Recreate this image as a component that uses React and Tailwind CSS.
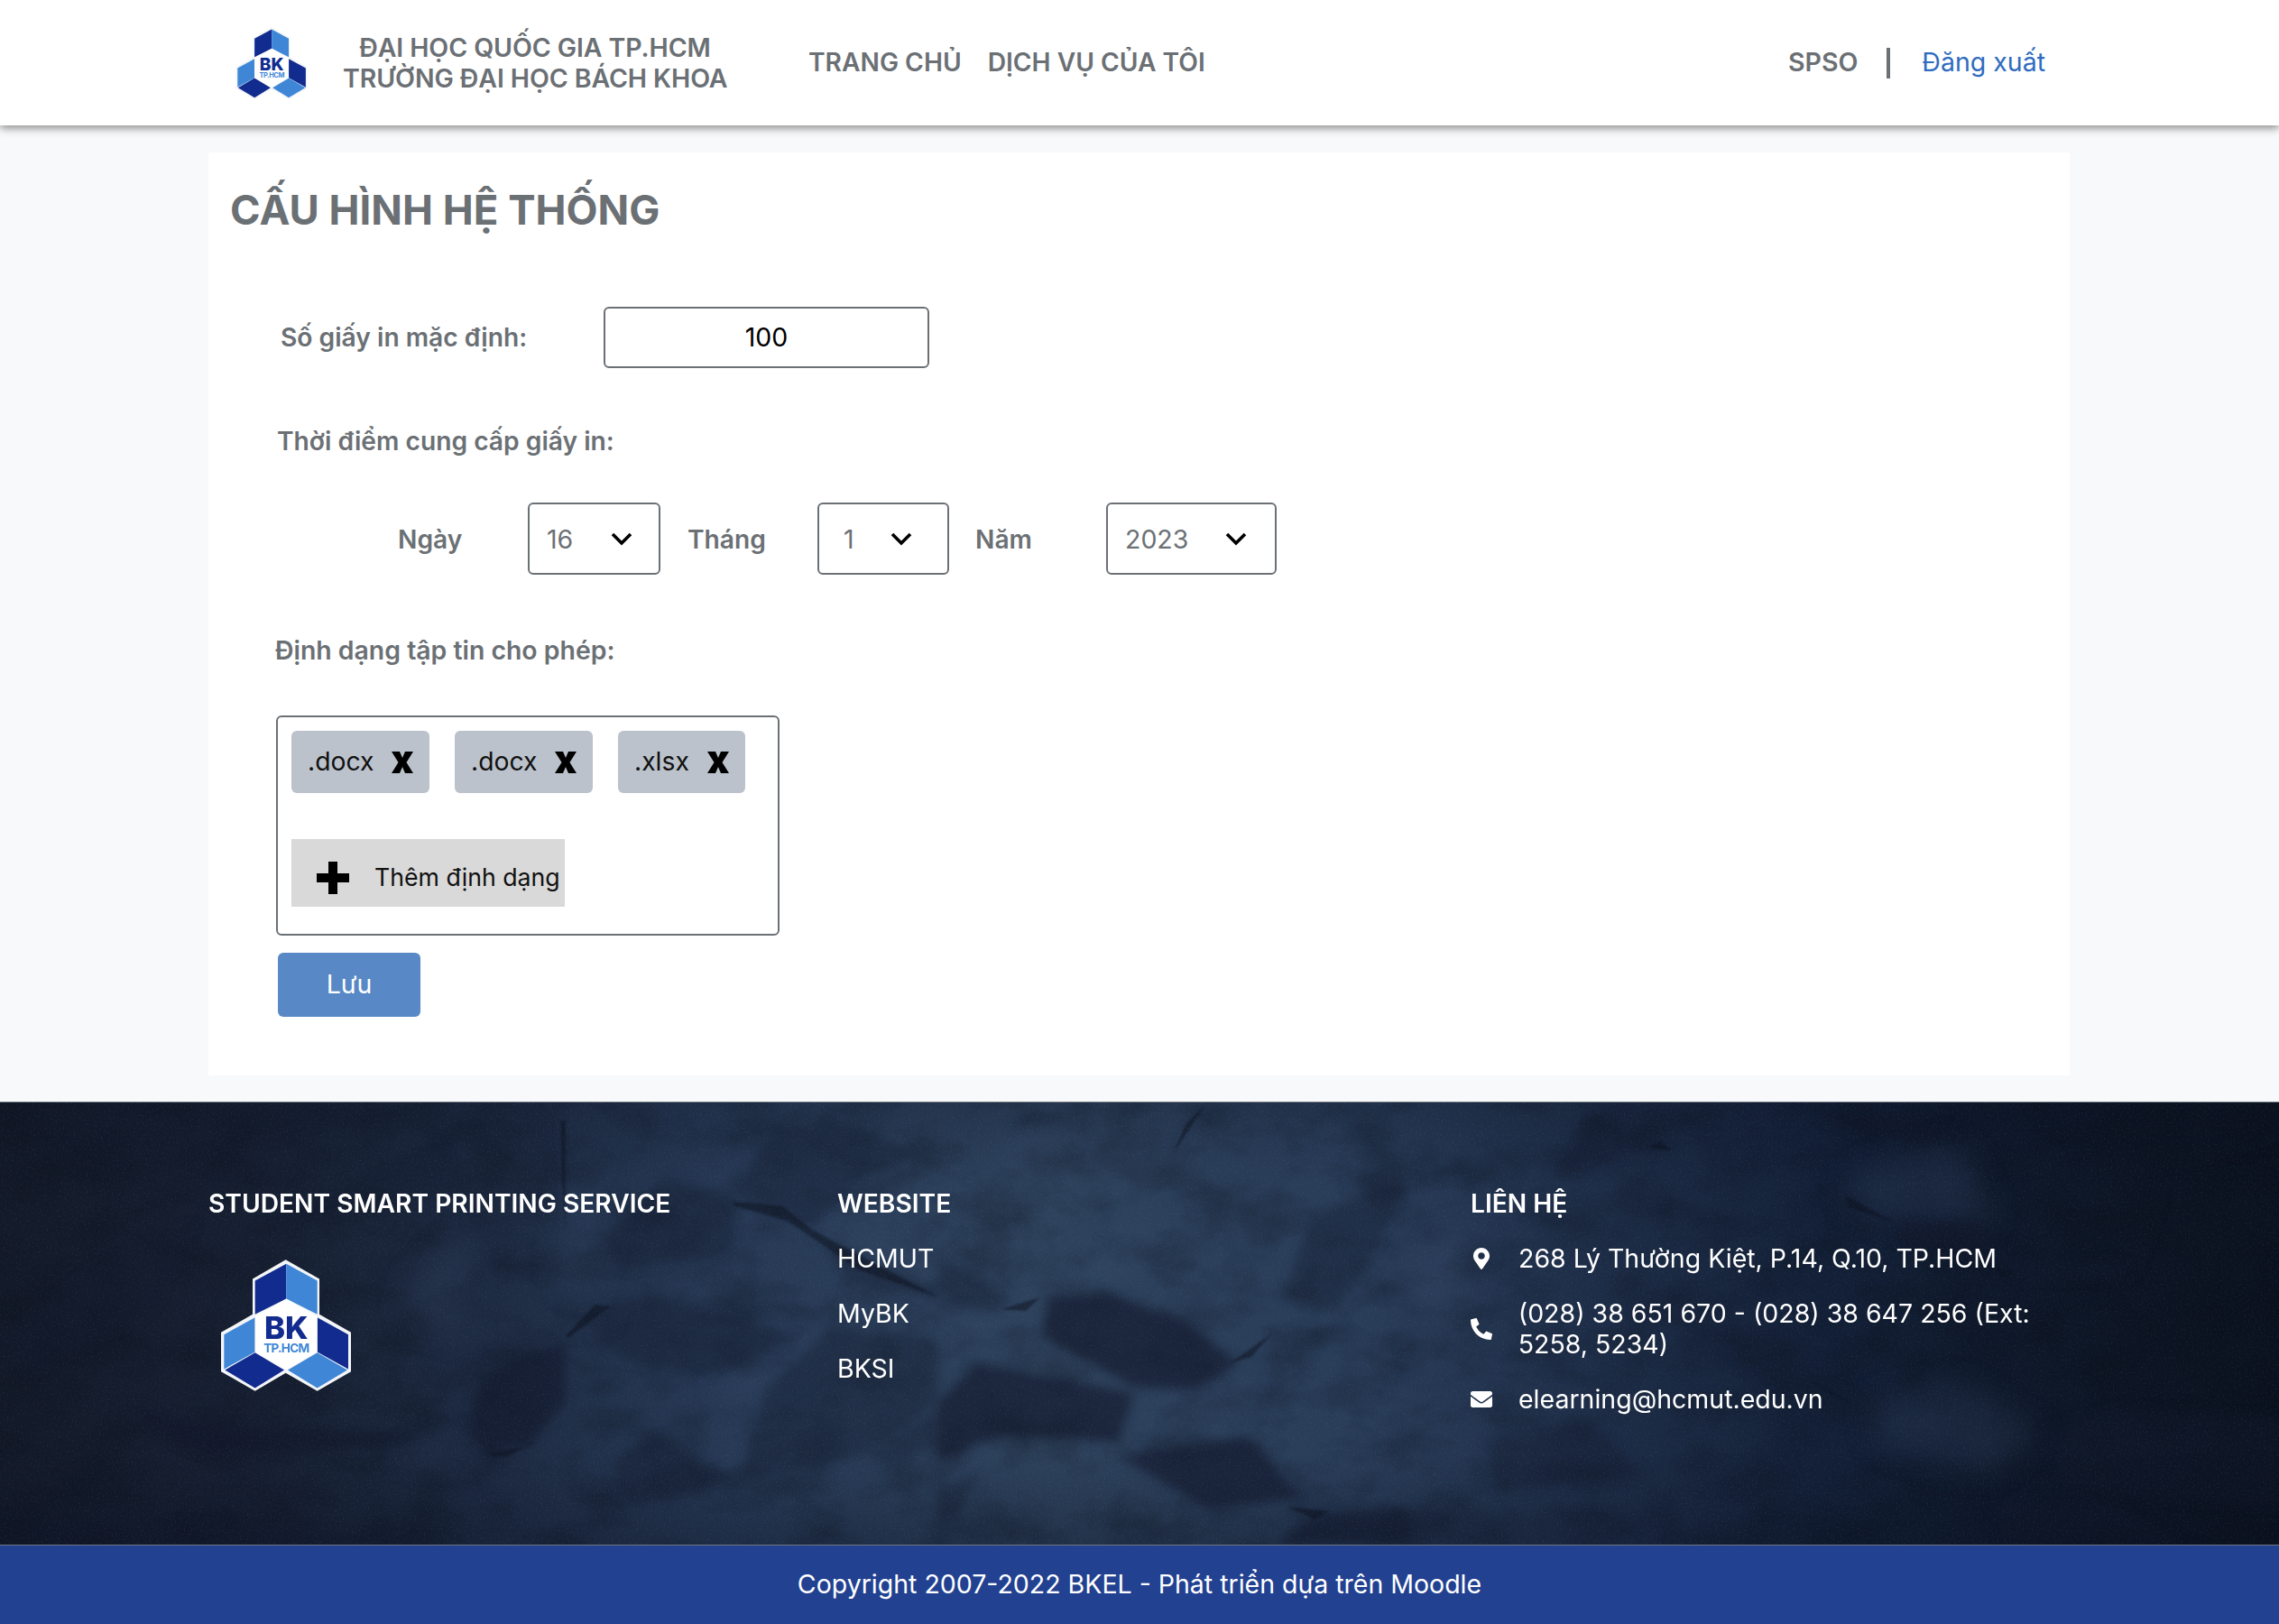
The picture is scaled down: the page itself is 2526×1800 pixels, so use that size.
import React from "react";
import { FaMapMarkerAlt, FaPhoneAlt, FaEnvelope } from "react-icons/fa";

function Logo({ className }) {
  return (
    <svg viewBox="0 0 432 437" className={className}>
      <g transform="translate(-135,-288)">
        <polygon points="350,288 462,352 462,470 567,530 567,660 455,725 350,665 248,725 135,660 135,530 240,470 240,352" fill="#f4f5f7" />
        <polygon points="352,302 248,358 248,470 352,418" fill="#112b8f" />
        <polygon points="352,302 455,358 455,470 352,418" fill="#3f87d6" />
        <polygon points="248,480 145,537 145,652 248,595" fill="#3f87d6" />
        <polygon points="248,597 148,655 248,715 345,655" fill="#112b8f" />
        <polygon points="455,480 558,537 558,652 455,595" fill="#112b8f" />
        <polygon points="455,597 357,655 455,715 555,655" fill="#3f87d6" />
        <polygon points="352,418 455,478 455,595 352,655 248,595 248,478" fill="#ffffff" />
        <text x="352" y="552" textAnchor="middle" fontFamily="Inter, sans-serif" fontWeight="800" fontSize="104" fill="#112b8f">BK</text>
        <text x="352" y="596" textAnchor="middle" fontFamily="Inter, sans-serif" fontWeight="700" fontSize="41" letterSpacing="-2.5" fill="#3f87d6">TP.HCM</text>
      </g>
    </svg>
  );
}

function Chevron() {
  return (
    <svg viewBox="0 0 24 15" className="h-[15px] w-[24px]">
      <path d="M2 2 L12 12 L22 2" fill="none" stroke="#000" strokeWidth="3.6" />
    </svg>
  );
}

function HeavyX() {
  return (
    <svg viewBox="0 0 24 24" className="h-[24px] w-[24px]">
      <polygon points="0,0 9,0 12,7 15,0 24,0 16.5,12 24,24 15,24 12,17 9,24 0,24 7.5,12" fill="#000" />
    </svg>
  );
}

function Chip({ label, w }) {
  return (
    <div className={`flex h-[69px] items-center rounded-[6px] bg-[#bbc2cb] pl-[18px] text-[28.3px] text-[#111] ${w}`}>
      <span>{label}</span>
      <span className="ml-[20px] flex"><HeavyX /></span>
    </div>
  );
}

function DateSelect({ value, w, textPad, chevPad }) {
  return (
    <div className={`flex h-[80px] items-center rounded-[6px] border-2 border-[#6b7075] text-[28.5px] text-[#6b7075] ${w} ${textPad}`}>
      <span className="pt-[2px]">{value}</span>
      <span className={`flex pt-[1px] ${chevPad}`}><Chevron /></span>
    </div>
  );
}

// polygon lists use coordinates of five 3x crops; [offset, "x,y x,y ..."]
const conv = ([off, s]) =>
  s.split(" ").map((q) => {
    const [x, y] = q.split(",").map(Number);
    return `${(x / 3 + off).toFixed(1)},${(y / 3).toFixed(1)}`;
  }).join(" ");

const veryDark = [
  [0, "400,1000 700,1080 1400,1100 1470,1000 1360,1140 750,1190 600,1140"],
  [520, "100,880 320,800 320,1000 200,1140 60,1180 0,1100 30,950"],
  [1040, "360,650 580,640 800,720 1000,870 850,960 650,950 350,780"],
  [1040, "0,1000 130,870 650,970 600,1130 200,1110 0,1200"],
  [1040, "580,1180 1040,1120 1200,1320 900,1360 650,1210"],
  [1040, "1250,1370 1560,1350 1560,1476 1130,1476"],
  [2006, "0,30 300,40 500,100 200,120"],
  [2006, "280,400 560,390 620,460 620,540 300,470"],
];
const dark = [
  [0, "1130,280 1500,90 1560,300 900,400"],
  [0, "0,800 300,560 650,400 500,700 100,900"],
  [0, "0,1430 500,1400 1560,1476 0,1476"],
  [520, "980,130 1200,50 1500,170 1300,260 1130,420 880,310"],
  [520, "450,450 650,250 880,310 880,500 500,560"],
  [520, "470,670 600,640 1000,760 1100,780 830,910 520,860 400,760"],
  [520, "990,950 1210,750 1560,790 1560,1000 1310,1180 900,1260"],
  [520, "480,1200 620,1090 750,1180 860,1250 680,1330 500,1310"],
  [520, "1320,1180 1560,1020 1560,1150 1400,1220"],
  [520, "1180,480 1560,620 1560,660 1300,600"],
  [1040, "0,530 60,540 240,650 200,700 30,680 0,620"],
  [1040, "1240,380 1400,310 1560,280 1450,500 1320,700 1150,650"],
  [1040, "1390,250 1440,230 1560,260 1560,320 1420,300"],
  [1040, "230,85 300,20 470,70 380,70"],
  [1040, "0,1290 140,1240 60,1380 0,1420"],
  [1560, "480,240 600,30 880,160 700,180 560,260"],
  [1560, "0,280 220,170 170,230"],
  [1560, "1000,760 1200,750 1560,1000 1560,1100 1250,1000"],
  [1560, "260,1130 600,1060 800,1250 300,1300"],
  [1560, "1300,0 1560,0 1560,130"],
  [1560, "0,1350 190,1380 40,1476 0,1476"],
  [2006, "640,540 1050,530 1060,590 700,590"],
  [2006, "600,1330 1000,1330 1240,1476 640,1476"],
  [2006, "770,1100 1000,1020 1560,1050 1560,1350 850,1300"],
];
const mid = [
  [0, "220,110 600,140 850,250 700,330 500,250"],
  [520, "0,0 300,0 300,400 0,420"],
  [1040, "760,330 880,270 1100,270 950,330"],
  [1040, "1100,780 1370,745 1100,930"],
  [1560, "1000,1400 1500,1476 1000,1476"],
];
const light = [
  [0, "1350,620 1560,420 1560,800 1350,720"],
  [0, "1290,1190 1560,1120 1560,1180"],
  [520, "810,930 1060,830 1210,750 1100,880 900,1000"],
  [520, "1130,430 1300,380 1560,420 1560,600"],
  [520, "330,250 430,240 460,430 400,640 300,600"],
  [1040, "0,700 290,720 230,800 0,860"],
  [1040, "230,650 520,480 760,340 620,600 360,640"],
  [1040, "700,1060 1000,900 1020,1020 800,1100"],
  [1040, "180,110 400,90 400,170 220,240"],
  [1560, "0,500 240,400 200,680 60,900"],
  [2006, "130,240 500,130 620,400 300,400 130,350"],
  [2006, "200,1000 500,940 770,1100 600,1240 220,1140"],
];
const creases = [
  [520, "880,330 1040,345 1140,425 1560,650 1300,560 1060,395 880,345"],
  [520, "305,60 320,60 320,420 310,260"],
  [520, "60,1175 200,1145 230,1125 120,1185"],
  [520, "470,680 420,675 320,780 330,785"],
  [1040, "210,690 340,650 290,695"],
  [1040, "780,170 890,5 825,70"],
  [1040, "1250,1390 1160,1350 1300,1365"],
  [1040, "970,870 1110,770 1040,850"],
  [1560, "840,130 880,160 800,150"],
  [2006, "280,400 120,310 130,350"],
  [2006, "620,550 680,570 640,580"],
  [2006, "1200,250 1560,140 1560,180 1300,220"],
  [2006, "1150,500 1210,270 1200,350 1090,620"],
  [2006, "150,1010 0,930 100,990"],
];

function Texture() {
  return (
    <svg viewBox="0 0 2526 492" preserveAspectRatio="none" className="absolute inset-0 h-full w-full">
      <defs>
        <linearGradient id="base" x1="0" x2="1" y1="0" y2="0">
          <stop offset="0" stopColor="#131a29" />
          <stop offset="0.12" stopColor="#172032" />
          <stop offset="0.21" stopColor="#1d2a41" />
          <stop offset="0.32" stopColor="#273955" />
          <stop offset="0.46" stopColor="#2e425c" />
          <stop offset="0.6" stopColor="#293c58" />
          <stop offset="0.7" stopColor="#1e2d47" />
          <stop offset="0.8" stopColor="#132037" />
          <stop offset="0.9" stopColor="#0e1727" />
          <stop offset="1" stopColor="#0b121f" />
        </linearGradient>
        <linearGradient id="vert" x1="0" x2="0" y1="0" y2="1">
          <stop offset="0" stopColor="#0a1020" stopOpacity="0.22" />
          <stop offset="0.18" stopColor="#0a1020" stopOpacity="0" />
          <stop offset="0.8" stopColor="#0a1020" stopOpacity="0" />
          <stop offset="1" stopColor="#0a1020" stopOpacity="0.3" />
        </linearGradient>
        <filter id="soft" colorInterpolationFilters="sRGB" x="-5%" y="-20%" width="110%" height="140%">
          <feGaussianBlur stdDeviation="6" />
        </filter>
        <filter id="softer" colorInterpolationFilters="sRGB" x="-5%" y="-20%" width="110%" height="140%">
          <feGaussianBlur stdDeviation="16" />
        </filter>
        <filter id="thin" colorInterpolationFilters="sRGB" x="-5%" y="-20%" width="110%" height="140%">
          <feGaussianBlur stdDeviation="1.2" />
        </filter>
        <filter id="mottle" colorInterpolationFilters="sRGB" x="0" y="0" width="100%" height="100%">
          <feTurbulence type="fractalNoise" baseFrequency="0.014 0.02" numOctaves="4" seed="11" />
          <feColorMatrix values="0 0 0 0 0.04  0 0 0 0 0.06  0 0 0 0 0.1  1.5 0 0 0 -0.62" />
        </filter>
        <filter id="grain" colorInterpolationFilters="sRGB" x="0" y="0" width="100%" height="100%">
          <feTurbulence type="fractalNoise" baseFrequency="0.5" numOctaves="2" seed="4" />
          <feColorMatrix values="0 0 0 0 0.5  0 0 0 0 0.6  0 0 0 0 0.75  2.6 0 0 0 -1.35" />
        </filter>
      </defs>
      <rect width="2526" height="492" fill="url(#base)" />
      <rect width="2526" height="492" filter="url(#mottle)" opacity="0.45" />
      <g filter="url(#softer)">
        {light.map((p) => <polygon key={p[1]} points={conv(p)} fill="#3b4f72" opacity="0.24" />)}
      </g>
      <g filter="url(#soft)">
        {mid.map((p) => <polygon key={p[1]} points={conv(p)} fill="#141a2a" opacity="0.25" />)}
        {dark.map((p) => <polygon key={p[1]} points={conv(p)} fill="#121a2c" opacity="0.38" />)}
        {veryDark.map((p) => <polygon key={p[1]} points={conv(p)} fill="#11172a" opacity="0.62" />)}
      </g>
      <g filter="url(#thin)">
        {creases.map((p) => <polygon key={p[1]} points={conv(p)} fill="#0b101c" opacity="0.5" />)}
      </g>
      <rect width="2526" height="492" fill="url(#vert)" />
      <rect width="2526" height="492" filter="url(#grain)" opacity="0.12" />
    </svg>
  );
}

const labelCls = "font-semibold text-[#6b7075]";

export default function App() {
  return (
    <div className="min-h-[1800px] w-[2526px] bg-[#f8f9fa] font-['Inter',sans-serif]">
      <header className="relative z-10 flex h-[139px] items-center bg-white pl-[261px] pr-[259px] shadow-[0_3px_9px_rgba(0,0,0,0.45)]">
        <Logo className="h-[80px] w-[80px]" />
        <div className="ml-[39px] w-[426px] whitespace-nowrap text-center text-[28.5px] font-semibold leading-[34px] tracking-[-0.1px] text-[#6b7075]">
          <div>ĐẠI HỌC QUỐC GIA TP.HCM</div>
          <div>TRƯỜNG ĐẠI HỌC BÁCH KHOA</div>
        </div>
        <nav className="ml-[90px] flex gap-[29px] text-[28.2px] font-semibold text-[#6b7075]">
          <span>TRANG CHỦ</span>
          <span>DỊCH VỤ CỦA TÔI</span>
        </nav>
        <div className="ml-auto flex items-center">
          <span className="text-[28.5px] font-semibold text-[#6b7075]">SPSO</span>
          <span className="ml-[32px] h-[34px] w-[4px] bg-[#6b7075]" />
          <span className="ml-[35px] text-[28.5px] text-[#2f6cc0]">Đăng xuất</span>
        </div>
      </header>

      <div className="pb-[29px] pl-[231px] pt-[30px]">
        <main className="h-[1023px] w-[2063px] bg-white pl-[24px] pt-[35px]">
          <h1 className="text-[45.5px] font-bold leading-[58px] text-[#6b7075]">CẤU HÌNH HỆ THỐNG</h1>

          <div className="ml-[56px] mt-[78px] flex items-center">
            <span className={`${labelCls} w-[358px] text-[28.2px]`}>Số giấy in mặc định:</span>
            <div className="flex h-[68px] w-[361px] items-center justify-center rounded-[6px] border-2 border-[#6b7075] text-[28.5px] text-black">100</div>
          </div>

          <div className={`${labelCls} ml-[52px] mt-[64px] text-[28.2px] leading-[34px]`}>Thời điểm cung cấp giấy in:</div>

          <div className="ml-[186px] mt-[51px] flex items-center">
            <span className={`${labelCls} w-[144px] pt-[2px] text-[28.2px]`}>Ngày</span>
            <DateSelect value="16" w="w-[147px]" textPad="pl-[19px]" chevPad="ml-[42px]" />
            <span className={`${labelCls} ml-[30px] w-[144px] pt-[2px] text-[28.2px]`}>Tháng</span>
            <DateSelect value="1" w="w-[146px]" textPad="pl-[27px]" chevPad="ml-[40px]" />
            <span className={`${labelCls} ml-[29px] w-[145px] pt-[2px] text-[28.2px]`}>Năm</span>
            <DateSelect value="2023" w="w-[189px]" textPad="pl-[19px]" chevPad="ml-[41px]" />
          </div>

          <div className={`${labelCls} ml-[50px] mt-[67px] text-[28.4px] leading-[34px]`}>Định dạng tập tin cho phép:</div>

          <div className="ml-[51px] mt-[55px] h-[244px] w-[558px] rounded-[6px] border-2 border-[#6b7075] pl-[15px] pt-[15px]">
            <div className="flex gap-[28px]">
              <Chip label=".docx" w="w-[153px]" />
              <Chip label=".docx" w="w-[153px]" />
              <Chip label=".xlsx" w="w-[141px]" />
            </div>
            <div className="mt-[51px] flex h-[75px] w-[303px] items-center bg-[#d9d9d9] pt-[10px] text-[26.7px] text-[#111]">
              <svg viewBox="0 0 36 36" className="ml-[28px] h-[36px] w-[36px]">
                <polygon points="13,0 23,0 23,13 36,13 36,23 23,23 23,36 13,36 13,23 0,23 0,13 13,13" fill="#000" />
              </svg>
              <span className="ml-[28px] whitespace-nowrap">Thêm định dạng</span>
            </div>
          </div>

          <button className="ml-[53px] mt-[19px] flex h-[71px] w-[158px] items-center justify-center rounded-[6px] bg-[#5888c5] text-[28.5px] text-white">Lưu</button>
        </main>
      </div>

      <footer className="relative h-[492px] overflow-hidden border-y border-[#6f7580]">
        <Texture />
        <div className="relative flex pl-[231px] pt-[95px] text-[28.5px] leading-[34px] text-white">
          <div className="w-[697px]">
            <div className="text-[28.2px] font-semibold">STUDENT SMART PRINTING SERVICE</div>
            <Logo className="ml-[14px] mt-[45px] h-[146px] w-[144px]" />
          </div>
          <div className="w-[702px]">
            <div className="text-[28.2px] font-semibold">WEBSITE</div>
            <div className="mt-[27px] flex flex-col gap-[27px]">
              <span>HCMUT</span>
              <span>MyBK</span>
              <span>BKSI</span>
            </div>
          </div>
          <div className="w-[640px]">
            <div className="text-[28.2px] font-semibold">LIÊN HỆ</div>
            <div className="mt-[27px] flex flex-col gap-[27px]">
              <div className="flex items-center">
                <span className="flex w-[53px]"><FaMapMarkerAlt size={24} /></span>
                <span>268 Lý Thường Kiệt, P.14, Q.10, TP.HCM</span>
              </div>
              <div className="flex items-center">
                <span className="flex w-[53px]"><FaPhoneAlt size={24} /></span>
                <span className="w-[590px]">(028) 38 651 670 - (028) 38 647 256 (Ext: 5258, 5234)</span>
              </div>
              <div className="flex items-center">
                <span className="flex w-[53px]"><FaEnvelope size={24} /></span>
                <span>elearning@hcmut.edu.vn</span>
              </div>
            </div>
          </div>
        </div>
      </footer>

      <div className="flex h-[87px] items-center justify-center bg-[#224191] text-[28.5px] text-white">
        Copyright 2007-2022 BKEL - Phát triển dựa trên Moodle
      </div>
    </div>
  );
}
